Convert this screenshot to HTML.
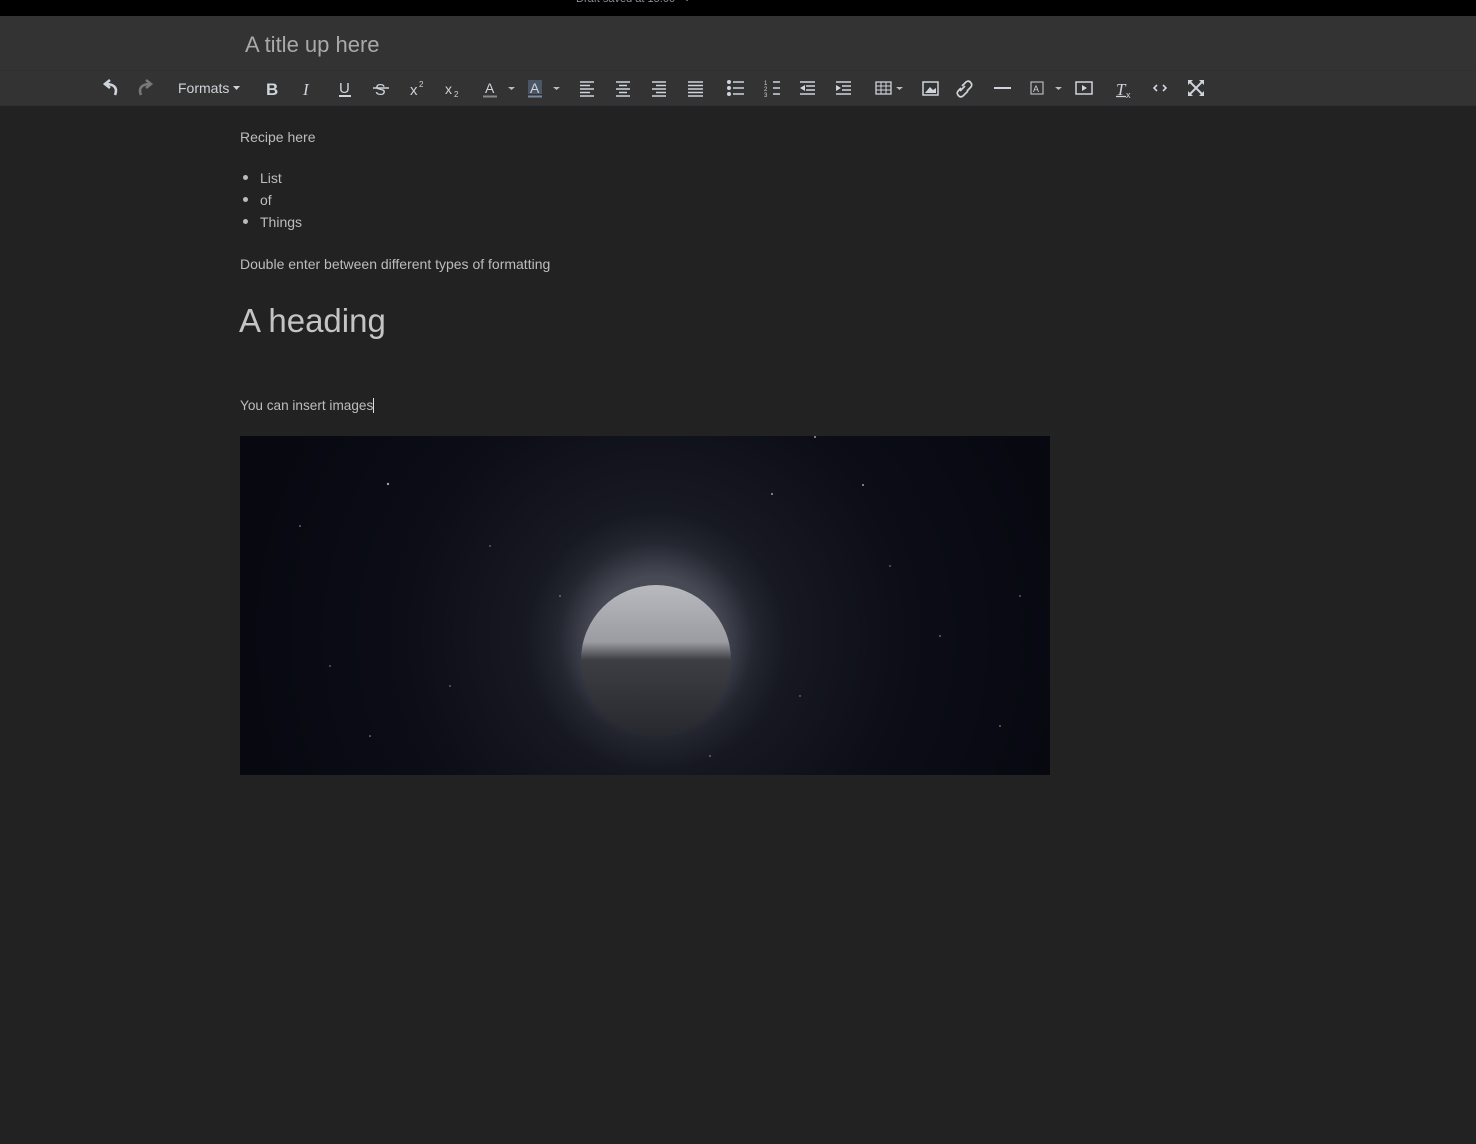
<!DOCTYPE html>
<html><head><meta charset="utf-8"><style>
html,body{margin:0;padding:0;width:1476px;height:1144px;background:#222;overflow:hidden;font-family:"Liberation Sans",sans-serif}
.top{position:absolute;left:0;top:0;width:1476px;height:16px;background:#000}
.top span{position:absolute;left:576px;top:-8px;font-size:11px;color:#8a8f99}
.title{position:absolute;left:0;top:16px;width:1476px;height:54px;background:#333;border-bottom:1px solid #2b3139}
.title span{position:absolute;left:245px;top:16px;font-size:22px;color:#a9a9a9}
.tb{position:absolute;left:0;top:71px;width:1476px;height:34px;background:#333;border-bottom:1px solid #2a2f38}
.tb svg{position:absolute;top:0;left:0}
.c{position:absolute;color:#bdbdbd;font-size:14px;white-space:nowrap}
.dot{position:absolute;width:5px;height:5px;border-radius:50%;background:#bbb}
</style></head><body>
<div class="top"><span>Draft saved at 15:00 &nbsp; ✓</span></div>
<div class="title"><span>A title up here</span></div>
<div class="tb">
<svg width="1476" height="34" viewBox="0 71 1476 34" fill="none" stroke="#cfd3da" stroke-width="2">
<path d="M115 95 C118 88 114 84 106 84 M110 80 L105 84 L110 88" stroke-width="2.6"/>
<path d="M141 95 C138 88 142 84 150 84 M146 80 L151 84 L146 88" stroke="#777" stroke-width="2.6"/>
<text x="178" y="93" fill="#cfd3da" stroke="none" font-size="14" font-family="Liberation Sans">Formats</text>
<path d="M233 86 L240 86 L236.5 90Z" fill="#cfd3da" stroke="none"/>
<text x="266" y="95" fill="#cfd3da" stroke="none" font-size="17" font-weight="bold">B</text>
<text x="303" y="95" fill="#cfd3da" stroke="none" font-size="17" font-style="italic" font-family="Liberation Serif">I</text>
<text x="339" y="93" fill="#cfd3da" stroke="none" font-size="15">U</text><path d="M339 96 H351"/>
<text x="375" y="95" fill="#cfd3da" stroke="none" font-size="16">S</text><path d="M373 88 H389" stroke-width="1.5"/>
<text x="410" y="95" fill="#cfd3da" stroke="none" font-size="15">x</text><text x="419" y="87" fill="#cfd3da" stroke="none" font-size="8">2</text>
<text x="445" y="94" fill="#cfd3da" stroke="none" font-size="14">x</text><text x="454" y="97" fill="#cfd3da" stroke="none" font-size="8">2</text>
<text x="485" y="93" fill="#cfd3da" stroke="none" font-size="14">A</text><path d="M483 96.5 H497" stroke="#888" stroke-width="2"/>
<path d="M508 87 L515 87 L511.5 90Z" fill="#bbb" stroke="none"/>
<rect x="528" y="80" width="14" height="14" fill="#4a5566" stroke="none"/>
<text x="530" y="93" fill="#cfd3da" stroke="none" font-size="14">A</text><path d="M528 96.5 H542" stroke="#7a8aa0" stroke-width="2"/>
<path d="M553 87 L560 87 L556.5 90Z" fill="#bbb" stroke="none"/>
<g stroke-width="1.6">
<path d="M580 82H594M580 85.5H590M580 89H594M580 92.5H590M580 96H594"/>
<path d="M616 82H630M619 85.5H627M616 89H630M619 92.5H627M616 96H630"/>
<path d="M652 82H666M656 85.5H666M652 89H666M656 92.5H666M652 96H666"/>
<path d="M688 82H703M688 85.5H703M688 89H703M688 92.5H703M688 96H703"/>
<path d="M733 82H744M733 88H744M733 94H744"/>
<path d="M773 82H780M773 88H780M773 94H780"/>
<path d="M800 82H815M806 86H815M806 90H815M800 94H815"/>
<path d="M836 82H851M842 86H851M842 90H851M836 94H851"/>
</g>
<g fill="#cfd3da" stroke="none"><circle cx="729" cy="82" r="2"/><circle cx="729" cy="88" r="2"/><circle cx="729" cy="94" r="2"/>
<text x="764" y="85" font-size="6">1</text><text x="764" y="91" font-size="6">2</text><text x="764" y="97" font-size="6">3</text>
<path d="M800 88 L805 85 L805 91Z"/><path d="M841 88 L836 85 L836 91Z"/></g>
<rect x="876" y="82" width="15" height="12" stroke-width="1.3"/><path d="M876 86H891M876 90H891M881 82V94M886 82V94" stroke-width="1"/>
<path d="M896 87 L903 87 L899.5 90Z" fill="#bbb" stroke="none"/>
<rect x="923" y="82" width="15" height="13" stroke-width="1.5"/><path d="M925 93 L930 87 L933 90 L936 88 L936 93Z" fill="#cfd3da" stroke="none"/>
<path d="M960 91 L965 86 M962 86 L966 82 Q969 80 971 83 Q973 85 970 88 L967 91 M968 91 L963 96 Q960 98 958 95 Q956 93 959 90 L961 88" stroke-width="1.7"/>
<path d="M994 88 H1011"/>
<rect x="1031" y="82" width="12" height="12" stroke-width="1"/><text x="1033" y="92" fill="#cfd3da" stroke="none" font-size="9">A</text>
<path d="M1055 87 L1062 87 L1058.5 90Z" fill="#bbb" stroke="none"/>
<rect x="1076" y="82" width="16" height="12" stroke-width="1.5"/><path d="M1082 85 L1087 88 L1082 91Z" fill="#cfd3da" stroke="none"/>
<text x="1116" y="95" fill="#cfd3da" stroke="none" font-size="17" font-style="italic" font-family="Liberation Serif">T</text><text x="1126" y="98" fill="#cfd3da" stroke="none" font-size="9">x</text><path d="M1116 96.5 H1126" stroke-width="1.3"/>
<path d="M1157 85 L1154 88 L1157 91 M1163 85 L1166 88 L1163 91" stroke-width="1.6"/>
<path d="M1189 81 L1196 88 L1203 81 M1189 95 L1196 88 L1203 95" stroke-width="2"/>
<path d="M1188 80 H1193 L1188 85Z M1204 80 H1199 L1204 85Z M1188 96 H1193 L1188 91Z M1204 96 H1199 L1204 91Z" fill="#cfd3da" stroke="none"/>
</svg>
</div>
<div class="c" style="left:240px;top:129px">Recipe here</div>
<div class="dot" style="left:243px;top:175px"></div><div class="c" style="left:260px;top:170px">List</div>
<div class="dot" style="left:243px;top:197px"></div><div class="c" style="left:260px;top:192px">of</div>
<div class="dot" style="left:243px;top:219px"></div><div class="c" style="left:260px;top:214px">Things</div>
<div class="c" style="left:240px;top:256px;font-size:14px">Double enter between different types of formatting</div>
<div class="c" style="left:239px;top:302px;font-size:33px;color:#c4c4c4">A heading</div>
<div class="c" style="left:240px;top:398px;font-size:13.6px">You can insert images<span style="border-left:1px solid #ddd;margin-left:0"></span></div>
<svg style="position:absolute;left:240px;top:436px" width="810" height="339">
<defs>
<radialGradient id="bg" cx="416" cy="200" r="420" gradientUnits="userSpaceOnUse">
<stop offset="0" stop-color="#30333d"/><stop offset="0.25" stop-color="#181a24"/><stop offset="0.6" stop-color="#0c0d17"/><stop offset="1" stop-color="#070810"/></radialGradient>
<radialGradient id="glow" cx="416" cy="205" r="130" gradientUnits="userSpaceOnUse">
<stop offset="0.5" stop-color="#9aa0aa" stop-opacity="0.3"/><stop offset="0.75" stop-color="#9aa0aa" stop-opacity="0.08"/><stop offset="1" stop-color="#9aa0aa" stop-opacity="0"/></radialGradient>
<linearGradient id="moon" x1="0" y1="0" x2="0" y2="1">
<stop offset="0" stop-color="#b8babf"/><stop offset="0.38" stop-color="#9a9ca1"/><stop offset="0.5" stop-color="#3c3e44"/><stop offset="1" stop-color="#28292e"/></linearGradient>
</defs>
<rect width="810" height="339" fill="url(#bg)"/>
<circle cx="416" cy="205" r="130" fill="url(#glow)"/>
<circle cx="416" cy="224" r="75" fill="url(#moon)"/>
<g fill="#9aa0aa"><circle cx="148" cy="48" r="1.2"/><circle cx="532" cy="58" r="1"/><circle cx="623" cy="49" r="1"/><circle cx="575" cy="1" r="1"/><circle cx="130" cy="300" r="0.8"/><circle cx="700" cy="200" r="0.8"/><circle cx="320" cy="160" r="0.8"/><circle cx="60" cy="90" r="0.8"/><circle cx="760" cy="290" r="0.8"/><circle cx="470" cy="320" r="0.8"/><circle cx="250" cy="110" r="0.7"/><circle cx="650" cy="130" r="0.7"/><circle cx="90" cy="230" r="0.7"/><circle cx="780" cy="160" r="0.7"/><circle cx="210" cy="250" r="0.7"/><circle cx="560" cy="260" r="0.7"/></g>
</svg>
</body></html>
